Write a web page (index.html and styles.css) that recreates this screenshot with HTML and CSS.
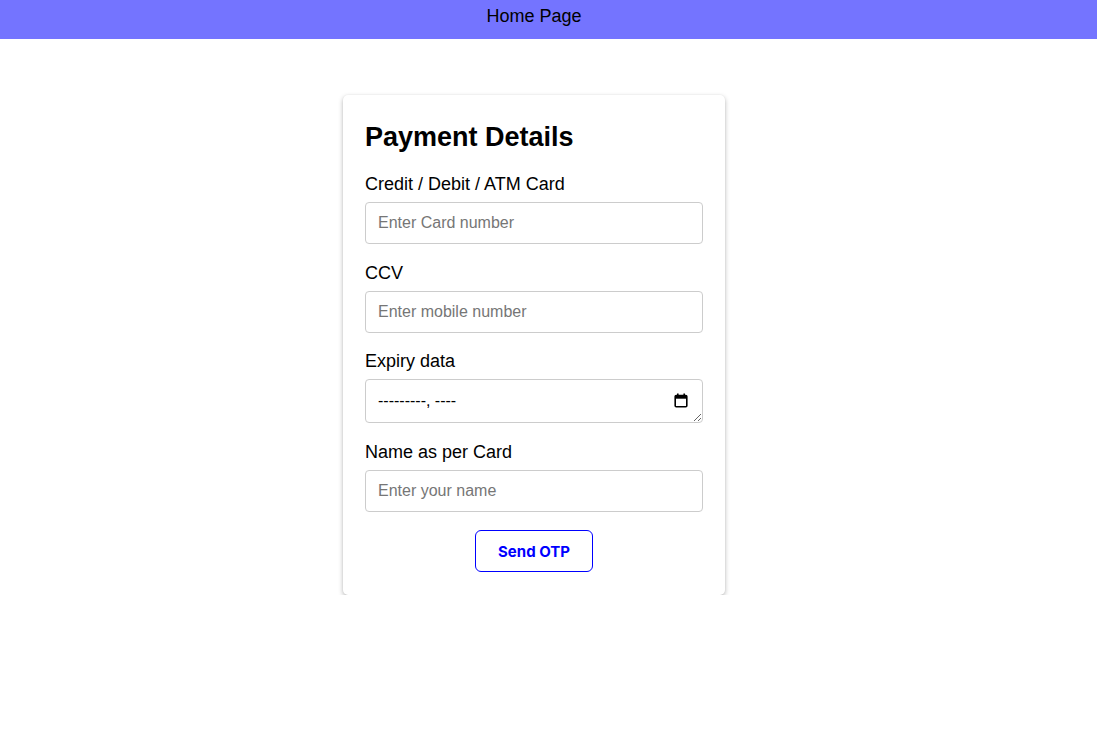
FILE: index.html
```html
<!DOCTYPE html>
<html>
<head>
<meta charset="utf-8">
<link rel="stylesheet" href="styles.css">
</head>
<body>
<header class="topbar"><span class="topbar-text">Home Page</span></header>
<main class="main">
  <form class="card">
    <h2 class="title">Payment Details</h2>
    <div class="field">
      <label class="label">Credit / Debit / ATM Card</label>
      <input class="input" type="text" placeholder="Enter Card number">
    </div>
    <div class="field">
      <label class="label">CCV</label>
      <input class="input" type="text" placeholder="Enter mobile number">
    </div>
    <div class="field">
      <label class="label">Expiry data</label>
      <div class="input datebox">
        <span class="date-text">---------, ----</span>
        <svg class="cal" width="14" height="15" viewBox="0 0 14 15" aria-hidden="true">
          <rect x="3" y="0.5" width="1.6" height="3" fill="#000"/>
          <rect x="9.4" y="0.5" width="1.6" height="3" fill="#000"/>
          <rect x="1.2" y="2.5" width="11.6" height="11.3" rx="1" fill="none" stroke="#000" stroke-width="1.6"/>
          <rect x="1.2" y="2.5" width="11.6" height="3.2" fill="#000"/>
        </svg>
      </div>
    </div>
    <div class="field">
      <label class="label">Name as per Card</label>
      <input class="input" type="text" placeholder="Enter your name">
    </div>
    <div class="actions">
      <button class="btn" type="button">Send OTP</button>
    </div>
  </form>
</main>
</body>
</html>
```
FILE: styles.css
```css
* { box-sizing: border-box; }
html, body { margin: 0; padding: 0; background: #fff; }
body { font-family: "Liberation Sans", Arial, sans-serif; color: #000; }
.topbar {
  height: 39px;
  background: #7474ff;
  padding-right: 29px;
  text-align: center;
  font-size: 18px;
  line-height: 32px;
  color: #000;
}
.main {
  display: flex;
  justify-content: center;
  padding-top: 56px;
  padding-right: 29px;
}
.card {
  width: 382px;
  background: #fff;
  border-radius: 5px;
  box-shadow: 0 2px 5px rgba(0,0,0,0.28), 0 0 2px rgba(0,0,0,0.06);
  padding: 24px 22px 23px 22px;
  display: flex;
  flex-direction: column;
}
.title {
  margin: 0 0 19px 0;
  font-size: 27px;
  font-weight: bold;
  line-height: 36px;
}
.field {
  display: flex;
  flex-direction: column;
  margin-bottom: 18.5px;
}
.label {
  font-size: 18px;
  line-height: 21px;
  margin-bottom: 7px;
}
.input {
  width: 338px;
  height: 42px;
  border: 1px solid #ccc;
  border-radius: 4px;
  padding: 0 12px;
  font-family: "Liberation Sans", Arial, sans-serif;
  font-size: 16px;
  color: #000;
  outline: none;
  background: #fff;
}
.input::placeholder { color: #767676; }
.datebox {
  height: 44px;
  display: flex;
  align-items: center;
  justify-content: space-between;
  padding: 0 14px 0 12px;
  resize: both;
  overflow: hidden;
}
.date-text { font-size: 16px; letter-spacing: 0; }
.cal { display: block; margin-top: -2px; }
.actions {
  display: flex;
  justify-content: center;
  padding-top: 0;
}
.btn {
  width: 118px;
  height: 42px;
  border: 1px solid #0000ff;
  border-radius: 6px;
  background: #fff;
  color: #0000ff;
  font-family: Inter, "Noto Sans", sans-serif;
  font-weight: 700;
  font-size: 15px;
}
```
